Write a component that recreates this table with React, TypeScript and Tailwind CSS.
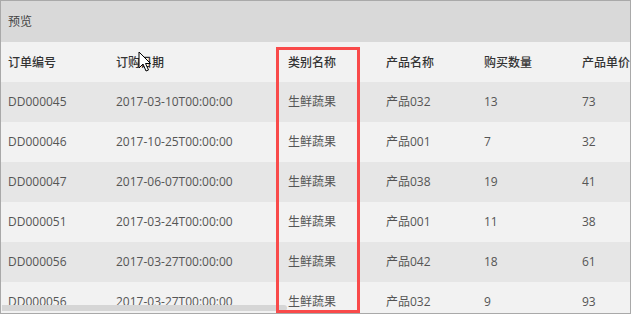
import React from "react";

const cols = ["订单编号", "订购日期", "类别名称", "产品名称", "购买数量", "产品单价"];

const rows = [
  ["DD000045", "2017-03-10T00:00:00", "生鲜蔬果", "产品032", "13", "73"],
  ["DD000046", "2017-10-25T00:00:00", "生鲜蔬果", "产品001", "7", "32"],
  ["DD000047", "2017-06-07T00:00:00", "生鲜蔬果", "产品038", "19", "41"],
  ["DD000051", "2017-03-24T00:00:00", "生鲜蔬果", "产品001", "11", "38"],
  ["DD000056", "2017-03-27T00:00:00", "生鲜蔬果", "产品042", "18", "61"],
  ["DD000056", "2017-03-27T00:00:00", "生鲜蔬果", "产品032", "9", "93"],
];

const grid = "grid grid-cols-[108px_172px_98px_98px_98px_1fr]";

export default function App() {
  return (
    <div
      className="relative w-[631px] h-[314px] overflow-hidden border border-[#a9a9a9] bg-[#f2f2f2] text-[12px]"
      style={{ fontFamily: '"Open Sans", "Noto Sans CJK SC", sans-serif' }}
    >
      <div className="h-[41px] bg-[#d9d9d9] flex items-center pl-[7px] text-[12px] text-[#444]">预览</div>

      <div className={`${grid} h-[40px] items-center bg-[#f2f2f2] text-[#333] font-medium pt-[1px]`}>
        {cols.map((c) => (
          <div key={c} className="pl-[7px] whitespace-nowrap">{c}</div>
        ))}
      </div>

      {rows.map((r, i) => (
        <div
          key={i}
          className={`${grid} h-[40px] items-center text-[#555] ${i % 2 === 0 ? "bg-[#e6e6e6]" : "bg-[#f2f2f2]"}`}
        >
          {r.map((v, j) => (
            <div key={j} className="pl-[7px] whitespace-nowrap">{v}</div>
          ))}
        </div>
      ))}

      {/* horizontal scrollbar */}
      <div className="absolute left-[1px] top-[304px] w-[285px] h-[6px] rounded-r-[3px] bg-[#d6d6d6]" />

      {/* highlight box */}
      <div className="absolute left-[275px] top-[46px] w-[84px] h-[266px] border-[3px] border-[#f94a4a]" />

      {/* mouse cursor */}
      <svg className="absolute left-[137px] top-[50px]" width="14" height="22" viewBox="0 0 14 22">
        <path d="M1 1 L1 17 L5 13 L8 20 L10.5 19 L7.5 12.5 L12.5 12.5 Z" fill="#fff" stroke="#000" strokeWidth="1" strokeLinejoin="round" />
      </svg>
    </div>
  );
}
